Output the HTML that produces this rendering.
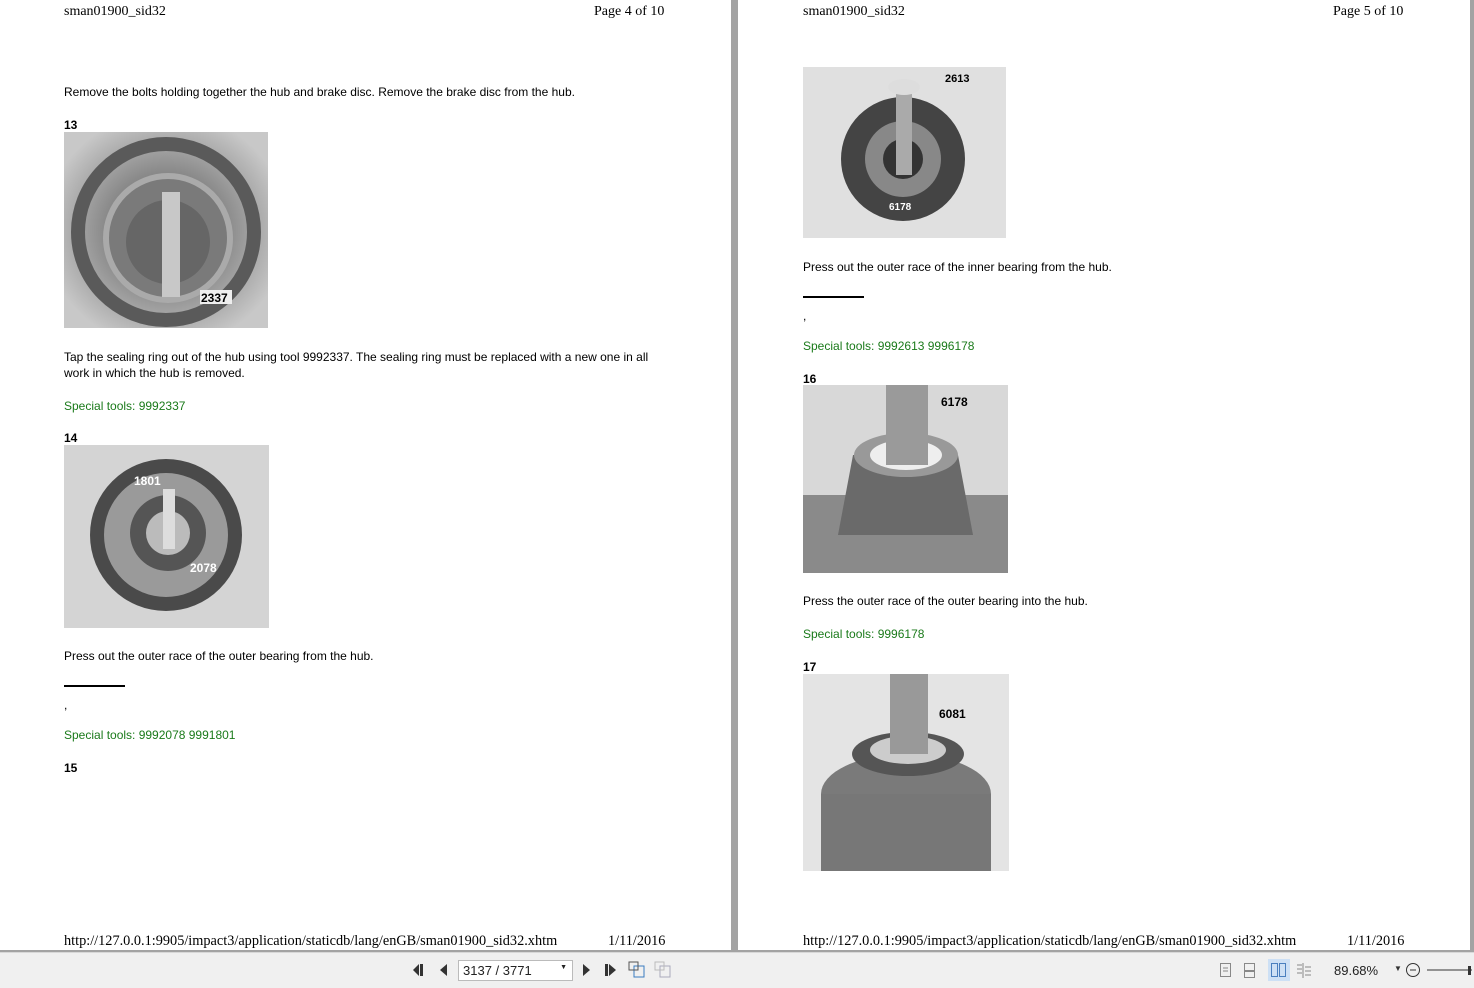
<!DOCTYPE html>
<html><head><meta charset="utf-8"><style>
*{margin:0;padding:0;box-sizing:border-box}
body{width:1474px;height:988px;background:#a3a3a3;position:relative;overflow:hidden;font-family:"Liberation Sans",Arial,sans-serif}
.pg{position:absolute;top:0;height:950px;background:#fff}
.t{position:absolute;font-size:12px;color:#000;white-space:nowrap;line-height:16px}
.s{position:absolute;font-family:"Liberation Serif",serif;font-size:14px;color:#000;white-space:nowrap}
.f{font-size:14.3px}
.g{color:#1a7a1a}
.b{font-weight:bold}
.hr{position:absolute;height:2px;background:#000;width:61px}
svg{position:absolute}
.tb{position:absolute;left:0;top:952px;width:1474px;height:36px;background:#f0f0f0;border-top:1px solid #d8d8d8}
</style></head><body>
<div class="pg" style="left:0;width:731px"></div>
<div class="pg" style="left:738px;width:732px"></div>

<!-- left page -->
<div class="s" style="left:64px;top:4px">sman01900_sid32</div>
<div class="s" style="left:594px;top:4px">Page 4 of 10</div>
<div class="t" style="left:64px;top:84px">Remove the bolts holding together the hub and brake disc. Remove the brake disc from the hub.</div>
<div class="t b" style="left:64px;top:117px">13</div>
<svg style="left:64px;top:132px" width="204" height="196"><defs><radialGradient id="a" cx="50%" cy="50%" r="60%"><stop offset="0" stop-color="#555"/><stop offset=".5" stop-color="#8a8a8a"/><stop offset="1" stop-color="#c8c8c8"/></radialGradient></defs><rect width="204" height="196" fill="url(#a)"/><circle cx="102" cy="100" r="88" fill="none" stroke="#5a5a5a" stroke-width="14"/><circle cx="104" cy="106" r="62" fill="#7a7a7a" stroke="#aaa" stroke-width="6"/><circle cx="104" cy="110" r="42" fill="#666"/><rect x="98" y="60" width="18" height="105" fill="#c8c8c8"/><rect x="136" y="158" width="32" height="14" fill="#eee"/><text x="137" y="170" font-size="12" font-weight="bold" font-family="Liberation Sans">2337</text></svg>
<div class="t" style="left:64px;top:349px;white-space:normal;width:600px">Tap the sealing ring out of the hub using tool 9992337. The sealing ring must be replaced with a new one in all work in which the hub is removed.</div>
<div class="t g" style="left:64px;top:398px">Special tools: 9992337</div>
<div class="t b" style="left:64px;top:430px">14</div>
<svg style="left:64px;top:445px" width="205" height="183"><rect width="205" height="183" fill="#d4d4d4"/><circle cx="102" cy="90" r="76" fill="#4a4a4a"/><circle cx="102" cy="90" r="62" fill="#9a9a9a"/><circle cx="104" cy="88" r="38" fill="#555"/><circle cx="104" cy="88" r="22" fill="#bbb"/><rect x="99" y="44" width="12" height="60" fill="#ddd"/><text x="70" y="40" font-size="12" font-weight="bold" fill="#fff" font-family="Liberation Sans">1801</text><text x="126" y="127" font-size="12" font-weight="bold" fill="#fff" font-family="Liberation Sans">2078</text></svg>
<div class="t" style="left:64px;top:648px">Press out the outer race of the outer bearing from the hub.</div>
<div class="hr" style="left:64px;top:685px"></div>
<div class="t" style="left:64px;top:697px">,</div>
<div class="t g" style="left:64px;top:727px">Special tools: 9992078 9991801</div>
<div class="t b" style="left:64px;top:760px">15</div>
<div class="s f" style="left:64px;top:933px">http://127.0.0.1:9905/impact3/application/staticdb/lang/enGB/sman01900_sid32.xhtm</div>
<div class="s f" style="left:608px;top:933px">1/11/2016</div>

<!-- right page -->
<div class="s" style="left:803px;top:4px">sman01900_sid32</div>
<div class="s" style="left:1333px;top:4px">Page 5 of 10</div>
<svg style="left:803px;top:67px" width="203" height="171"><rect width="203" height="171" fill="#e0e0e0"/><circle cx="100" cy="92" r="62" fill="#444"/><circle cx="100" cy="92" r="38" fill="#888"/><circle cx="100" cy="92" r="20" fill="#333"/><rect x="93" y="18" width="16" height="90" fill="#aaa"/><ellipse cx="101" cy="20" rx="16" ry="8" fill="#ddd"/><text x="142" y="15" font-size="11" font-weight="bold" font-family="Liberation Sans">2613</text><text x="86" y="143" font-size="10" font-weight="bold" fill="#fff" font-family="Liberation Sans">6178</text></svg>
<div class="t" style="left:803px;top:259px">Press out the outer race of the inner bearing from the hub.</div>
<div class="hr" style="left:803px;top:296px"></div>
<div class="t" style="left:803px;top:308px">,</div>
<div class="t g" style="left:803px;top:338px">Special tools: 9992613 9996178</div>
<div class="t b" style="left:803px;top:371px">16</div>
<svg style="left:803px;top:385px" width="205" height="188"><rect width="205" height="188" fill="#d8d8d8"/><rect x="0" y="110" width="205" height="78" fill="#8a8a8a"/><path d="M50 70 L155 70 L170 150 L35 150Z" fill="#6a6a6a"/><ellipse cx="103" cy="70" rx="52" ry="22" fill="#999"/><ellipse cx="103" cy="70" rx="36" ry="15" fill="#eee"/><rect x="83" y="0" width="42" height="80" fill="#9a9a9a"/><text x="138" y="21" font-size="12" font-weight="bold" font-family="Liberation Sans">6178</text></svg>
<div class="t" style="left:803px;top:593px">Press the outer race of the outer bearing into the hub.</div>
<div class="t g" style="left:803px;top:626px">Special tools: 9996178</div>
<div class="t b" style="left:803px;top:659px">17</div>
<svg style="left:803px;top:674px" width="206" height="197"><rect width="206" height="197" fill="#e4e4e4"/><ellipse cx="103" cy="120" rx="85" ry="40" fill="#7a7a7a"/><rect x="18" y="120" width="170" height="77" fill="#777"/><ellipse cx="105" cy="80" rx="56" ry="22" fill="#555"/><ellipse cx="105" cy="76" rx="38" ry="14" fill="#ccc"/><rect x="87" y="0" width="38" height="80" fill="#999"/><text x="136" y="44" font-size="12" font-weight="bold" font-family="Liberation Sans">6081</text></svg>
<div class="s f" style="left:803px;top:933px">http://127.0.0.1:9905/impact3/application/staticdb/lang/enGB/sman01900_sid32.xhtm</div>
<div class="s f" style="left:1347px;top:933px">1/11/2016</div>

<!-- toolbar -->
<div class="tb">
<svg style="left:410px;top:9px" width="20" height="16"><path d="M9 2 L3 8 L9 14Z" fill="#333"/><rect x="10" y="2" width="3" height="12" fill="#333"/></svg>
<svg style="left:436px;top:9px" width="14" height="16"><path d="M11 2 L4 8 L11 14Z" fill="#333"/></svg>
<div style="position:absolute;left:458px;top:7px;width:115px;height:21px;background:#fff;border:1px solid #bbb;font-size:13px;padding:2px 4px;color:#222">3137 / 3771<span style="position:absolute;right:5px;top:3px;font-size:7px">▼</span></div>
<svg style="left:580px;top:9px" width="14" height="16"><path d="M3 2 L10 8 L3 14Z" fill="#333"/></svg>
<svg style="left:602px;top:9px" width="20" height="16"><rect x="3" y="2" width="3" height="12" fill="#333"/><path d="M7 2 L14 8 L7 14Z" fill="#333"/></svg>
<svg style="left:628px;top:8px" width="18" height="18"><rect x="6" y="5" width="10" height="11" fill="none" stroke="#3a7bbf"/><rect x="1" y="1" width="9" height="8" fill="none" stroke="#555"/></svg>
<svg style="left:654px;top:8px" width="18" height="18"><rect x="6" y="5" width="10" height="11" fill="none" stroke="#aab"/><rect x="1" y="1" width="9" height="8" fill="none" stroke="#bbb"/></svg>
<svg style="left:1220px;top:10px" width="12" height="15"><rect x=".5" y=".5" width="10" height="13" fill="none" stroke="#888"/><path d="M3 5h5M3 8h5" stroke="#888"/></svg>
<svg style="left:1244px;top:10px" width="12" height="15"><rect x=".5" y=".5" width="10" height="7" fill="none" stroke="#888"/><rect x=".5" y="8.5" width="10" height="6" fill="none" stroke="#888"/></svg>
<div style="position:absolute;left:1268px;top:6px;width:22px;height:22px;background:#cde0f5"></div>
<svg style="left:1271px;top:10px" width="16" height="15"><rect x=".5" y=".5" width="6" height="13" fill="none" stroke="#4a7fbf"/><rect x="8.5" y=".5" width="6" height="13" fill="none" stroke="#4a7fbf"/></svg>
<svg style="left:1296px;top:10px" width="16" height="15"><path d="M7 0v15M1 2h5M1 6h5M1 10h5M9 4h6M9 8h6M9 12h6" stroke="#888"/></svg>
<div style="position:absolute;left:1334px;top:10px;font-size:13px;color:#222">89.68%</div>
<div style="position:absolute;left:1394px;top:11px;font-size:8px;color:#333">▼</div>
<svg style="left:1405px;top:9px" width="70" height="18"><circle cx="8" cy="8" r="6.5" fill="none" stroke="#333"/><path d="M5 8h6M22 8h45" stroke="#333"/><rect x="63" y="4" width="3" height="9" fill="#333"/></svg>
</div>
</body></html>
